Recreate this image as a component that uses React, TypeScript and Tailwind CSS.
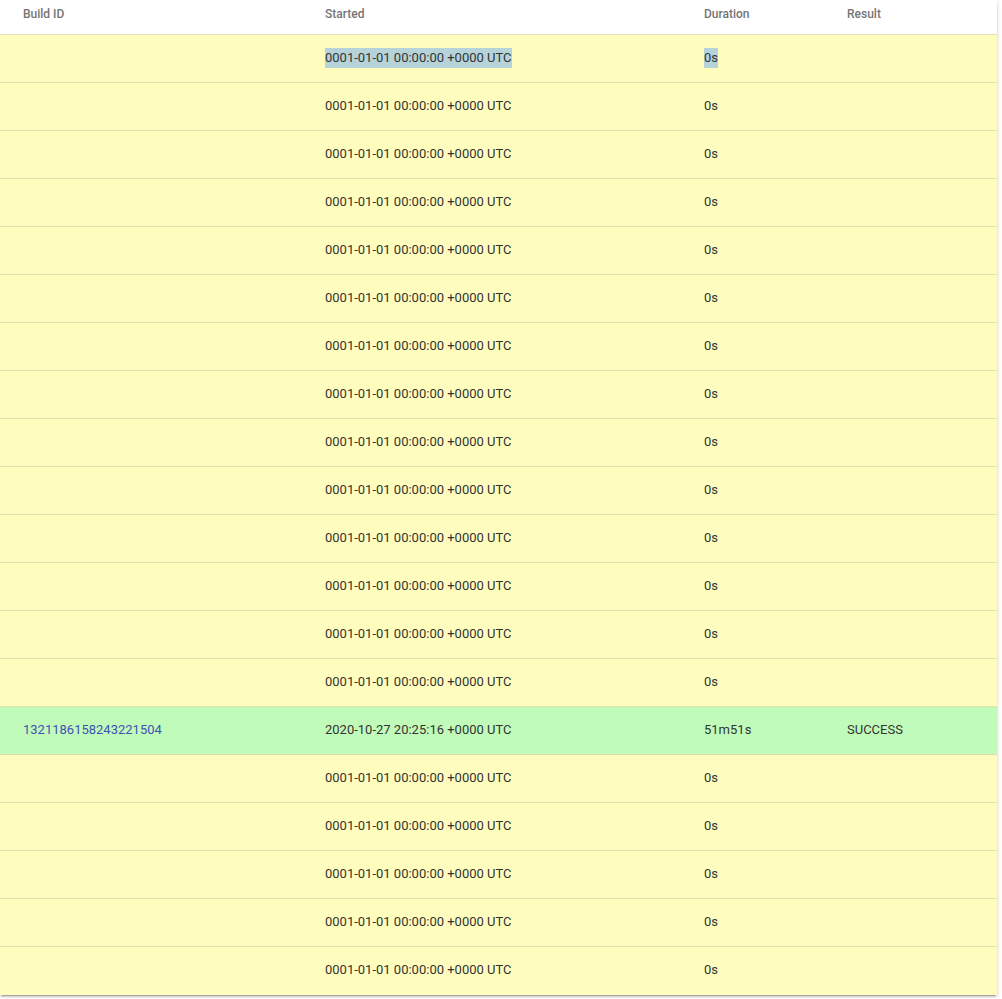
import React from "react";

type Row = { id?: string; started: string; duration: string; result?: string; ok?: boolean; sel?: boolean };

const empty = "0001-01-01 00:00:00 +0000 UTC";
const rows: Row[] = [];
for (let i = 0; i < 14; i++) rows.push({ started: empty, duration: "0s", sel: i === 0 });
rows.push({ id: "1321186158243221504", started: "2020-10-27 20:25:16 +0000 UTC", duration: "51m51s", result: "SUCCESS", ok: true });
for (let i = 0; i < 5; i++) rows.push({ started: empty, duration: "0s" });

export default function App() {
  return (
    <div className="w-[1002px] h-[999px] bg-white" style={{ fontFamily: "Roboto, 'Liberation Sans', sans-serif" }}>
      <div className="w-[997px] bg-white shadow-[0_2px_2px_rgba(0,0,0,0.14),0_1px_5px_rgba(0,0,0,0.12),0_3px_1px_-2px_rgba(0,0,0,0.2)]">
        <div className="grid grid-cols-[325px_379px_143px_1fr] h-[35px] items-start pt-[6px] leading-[16px] border-b border-[#e3e1b3] text-[12px] font-medium text-[#757575]">
          <div className="pl-[23px]">Build ID</div>
          <div>Started</div>
          <div>Duration</div>
          <div>Result</div>
        </div>
        {rows.map((r, i) => (
          <div
            key={i}
            className={`grid grid-cols-[325px_379px_143px_1fr] h-[48px] items-center pb-[2px] text-[13px] text-[#333333] ${
              i === rows.length - 1 ? "" : "border-b"
            } ${r.ok ? "bg-[#c1fbb9] border-[#dcdcb0]" : "bg-[#fffdbd] border-[#e3e1b3]"}`}
          >
            <div className="pl-[23px] text-[#3f51b5]">{r.id ?? ""}</div>
            <div>
              <span className={`inline-block leading-[20px] ${r.sel ? "bg-[#b7d3da]" : ""}`}>{r.started}</span>
            </div>
            <div>
              <span className={`inline-block leading-[20px] ${r.sel ? "bg-[#b7d3da]" : ""}`}>{r.duration}</span>
            </div>
            <div>{r.result ?? ""}</div>
          </div>
        ))}
      </div>
    </div>
  );
}
